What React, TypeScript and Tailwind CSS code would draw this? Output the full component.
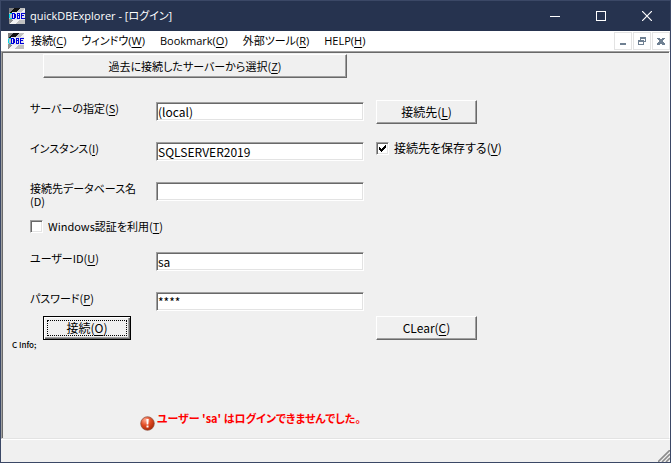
import React, { useState } from 'react';

const raised =
  "border border-t-white border-l-white border-r-[#696969] border-b-[#696969] shadow-[inset_-1px_-1px_0_#a0a0a0] bg-[#f0f0f0]";
const sunken =
  "border border-t-[#a0a0a0] border-l-[#a0a0a0] border-r-white border-b-white bg-white shadow-[inset_1px_1px_0_#696969,inset_-1px_-1px_0_#e3e3e3]";

function Key({ text, k }: { text: string; k: string }) {
  return (
    <>
      {text}(<span className="underline underline-offset-2">{k}</span>)
    </>
  );
}

function AppIcon() {
  return (
    <svg className="h-4 w-4 shrink-0" viewBox="0 0 16 16" shapeRendering="crispEdges" aria-hidden="true">
      <rect width="16" height="16" fill="#c0c0c0" />
      <path d="M0 0H11L6 5H0Z" fill="#101010" />
      <path d="M0 0H5L0 5Z" fill="#808080" />
      <path d="M16 0V5H11Z" fill="#f4f4f4" />
      <path d="M0 16L5 11H11L6 16Z" fill="#f4f4f4" />
      <path d="M0 11H5L0 16Z" fill="#909090" />
      <rect x="3" y="4" width="13" height="8" fill="#e4e4ee" />
      <path d="M1 5H3V6H1ZM0 6H1V10H0ZM1 10H3V11H1Z" fill="#00d5e8" />
      <path
        d="M3 5H6V6H7V10H6V11H3ZM5 6H4V10H5ZM8 5H11V7H10.5V8H11V11H8ZM9 6V7H10V6ZM9 8V10H10V8ZM12 5H16V6H13V7H15V8H13V10H16V11H12Z"
        fill="#0000d8"
        fillRule="evenodd"
      />
    </svg>
  );
}

function CheckBox({ id, text, k, initial }: { id: string; text: string; k: string; initial: boolean }) {
  const [on, setOn] = useState(initial);
  return (
    <label htmlFor={id} className="flex items-center gap-[5px]">
      <span className="grid h-[13px] w-[13px]">
        <input
          id={id}
          type="checkbox"
          checked={on}
          onChange={() => setOn(!on)}
          className={`col-start-1 row-start-1 h-[13px] w-[13px] appearance-none ${sunken}`}
        />
        {on && (
          <svg
            className="pointer-events-none z-10 col-start-1 row-start-1 h-[13px] w-[13px]"
            viewBox="0 0 13 13"
            shapeRendering="crispEdges"
            aria-hidden="true"
          >
            <path d="M3 5H4V6H5V7H6V6H7V5H8V4H9V3H10V6H9V7H8V8H7V9H6V10H5V9H4V8H3Z" fill="#000" />
          </svg>
        )}
      </span>
      <span>
        <Key text={text} k={k} />
      </span>
    </label>
  );
}

type FieldProps = {
  id: string;
  text: string;
  k: string;
  value: string;
  type?: string;
  wrap?: boolean;
  children?: React.ReactNode;
};

function Field({ id, text, k, value, type = "text", wrap, children }: FieldProps) {
  return (
    <div className="grid h-10 grid-cols-[126px_208px_1fr] items-start">
      <label htmlFor={id} className={wrap ? "mt-0.5 text-[11px] leading-[13px]" : "text-[11px] leading-4"}>
        {wrap ? (
          <>
            {text}
            <br />({k})
          </>
        ) : (
          <Key text={text} k={k} />
        )}
      </label>
      <input id={id} type={type} defaultValue={value} className={`mt-0.5 h-[19px] w-full rounded-none pl-px outline-none ${sunken}`} />
      <div className="pl-3">{children}</div>
    </div>
  );
}

const menus = [
  ["接続", "C"],
  ["ウィンドウ", "W"],
  ["Bookmark", "O"],
  ["外部ツール", "R"],
  ["HELP", "H"],
];

export default function App() {
  return (
    <div className="flex min-h-screen flex-col border border-[#3b4866] bg-[#f0f0f0] font-['Noto_Sans_CJK_JP',sans-serif] text-xs text-black [font-feature-settings:'palt']">
      <header className="flex h-[30px] items-center bg-[#26334f] pl-2 font-['Open_Sans','Noto_Sans_CJK_JP',sans-serif] text-[11px] text-white">
        <AppIcon />
        <h1 className="grow pl-[5px]">quickDBExplorer - [ログイン]</h1>
        <div className="flex h-full">
          <button aria-label="最小化" className="grid w-[46px] place-items-center">
            <svg width="10" height="10" viewBox="0 0 10 10" shapeRendering="crispEdges"><path d="M0 5H10V6H0Z" fill="#fff" /></svg>
          </button>
          <button aria-label="最大化" className="grid w-[46px] place-items-center">
            <svg width="10" height="10" viewBox="0 0 10 10" shapeRendering="crispEdges"><path d="M.5.5H9.5V9.5H.5Z" fill="none" stroke="#fff" /></svg>
          </button>
          <button aria-label="閉じる" className="grid w-[46px] place-items-center">
            <svg width="10" height="10" viewBox="0 0 10 10"><path d="M0 0L10 10M10 0L0 10" stroke="#fff" strokeWidth="1.2" /></svg>
          </button>
        </div>
      </header>

      <nav className="flex h-5 items-center bg-white pl-[7px] font-['Open_Sans','Noto_Sans_CJK_JP',sans-serif] text-[11px]">
        <AppIcon />
        <div className="flex grow gap-[15px] pl-[7px]">
          {menus.map(([text, k]) => (
            <button key={k} className="whitespace-nowrap">
              <Key text={text} k={k} />
            </button>
          ))}
        </div>
        <div className="flex gap-px text-[#6f8092]">
          <button aria-label="子ウィンドウを最小化" className="grid h-[18px] w-[18px] place-items-center border border-[#e3e3e3]">
            <svg width="10" height="10" viewBox="0 0 10 10" shapeRendering="crispEdges"><path d="M2 7H8V9H2Z" fill="currentColor" /></svg>
          </button>
          <button aria-label="子ウィンドウを元に戻す" className="grid h-[18px] w-[18px] place-items-center border border-[#e3e3e3]">
            <svg width="10" height="10" viewBox="0 0 10 10" shapeRendering="crispEdges">
              <path d="M3 1H9V6H7V5H8V3H4V4H3ZM1 4H7V9H1ZM2 6V8H6V6Z" fill="currentColor" fillRule="evenodd" />
            </svg>
          </button>
          <button aria-label="子ウィンドウを閉じる" className="grid h-[18px] w-[18px] place-items-center border border-[#e3e3e3]">
            <svg width="10" height="10" viewBox="0 0 10 10" shapeRendering="crispEdges">
              <path d="M1 2H4V3H6V2H9V3H8V4H7V6H8V7H9V9H6V8H4V9H1V7H2V6H3V4H2V3H1Z" fill="currentColor" />
            </svg>
          </button>
        </div>
      </nav>

      <main className="grow border-t border-r border-b border-l border-t-[#a0a0a0] border-r-white border-b-[#e3e3e3] border-l-[#a0a0a0] shadow-[inset_1px_1px_0_#696969]">
        <form className="pl-7" onSubmit={(e) => e.preventDefault()}>
          <button type="button" className={`mt-0.5 ml-[13px] block h-6 w-[304px] text-[11px] ${raised}`}>
            <Key text="過去に接続したサーバーから選択" k="Z" />
          </button>

          <div className="pt-[22px]">
            <Field id="server" text="サーバーの指定" k="S" value="(local)">
              <button type="button" className={`h-6 w-[101px] ${raised}`}>
                <Key text="接続先" k="L" />
              </button>
            </Field>
            <Field id="instance" text="インスタンス" k="I" value="SQLSERVER2019">
              <CheckBox id="save" text="接続先を保存する" k="V" initial={true} />
            </Field>
            <Field id="database" text="接続先データベース名" k="D" value="" wrap />
            <div className="h-[30px] text-[11px] leading-[13px]">
              <CheckBox id="winauth" text="Windows認証を利用" k="T" initial={false} />
            </div>
            <Field id="user" text="ユーザーID" k="U" value="sa" />
            <div className="h-[26px]">
              <Field id="password" text="パスワード" k="P" value="****" />
            </div>
          </div>

          <div className="grid grid-cols-[334px_1fr]">
            <button
              type="submit"
              className="ml-[13px] h-6 w-[88px] border border-black p-[3px] shadow-[inset_1px_1px_0_#fff,inset_-1px_-1px_0_#696969,inset_-2px_-2px_0_#a0a0a0]"
            >
              <span className="flex h-full items-center justify-center border border-dotted border-black">
                <span>
                  <Key text="接続" k="O" />
                </span>
              </span>
            </button>
            <div className="pl-3">
              <button type="reset" className={`h-6 w-[101px] ${raised}`}>
                <Key text="CLear" k="C" />
              </button>
            </div>
          </div>
        </form>
        <p className="pl-2.5 text-[8px] leading-[10px] font-medium">C Info;</p>

        <p role="alert" className="flex gap-0.5 pt-[60px] pl-[138px] text-[11px] font-bold text-[#f00]">
          <svg className="mt-1.5 h-[15px] w-[15px]" viewBox="0 0 15 15" aria-hidden="true">
            <defs>
              <radialGradient id="ball" cx="0.35" cy="0.25" r="0.8">
                <stop offset="0" stopColor="#ffa890" />
                <stop offset="0.5" stopColor="#e04a22" />
                <stop offset="1" stopColor="#a82808" />
              </radialGradient>
            </defs>
            <circle cx="7.5" cy="7.5" r="6.8" fill="url(#ball)" stroke="#8c4a38" strokeWidth="0.7" />
            <path d="M6.3 3H8.7L8.3 8.5H6.7ZM6.5 9.6H8.5V11.6H6.5Z" fill="#fff" />
          </svg>
          <span className="leading-4">ユーザー 'sa' はログインできませんでした。</span>
        </p>
      </main>

      <footer className="flex h-[23px] items-end justify-end border-t border-white">
        <svg className="h-3 w-3" viewBox="0 0 12 12" aria-hidden="true">
          <path d="M0 12L12 0M4 12L12 4M8 12L12 8" stroke="#8c8c8c" strokeWidth="1.6" />
        </svg>
      </footer>
    </div>
  );
}
